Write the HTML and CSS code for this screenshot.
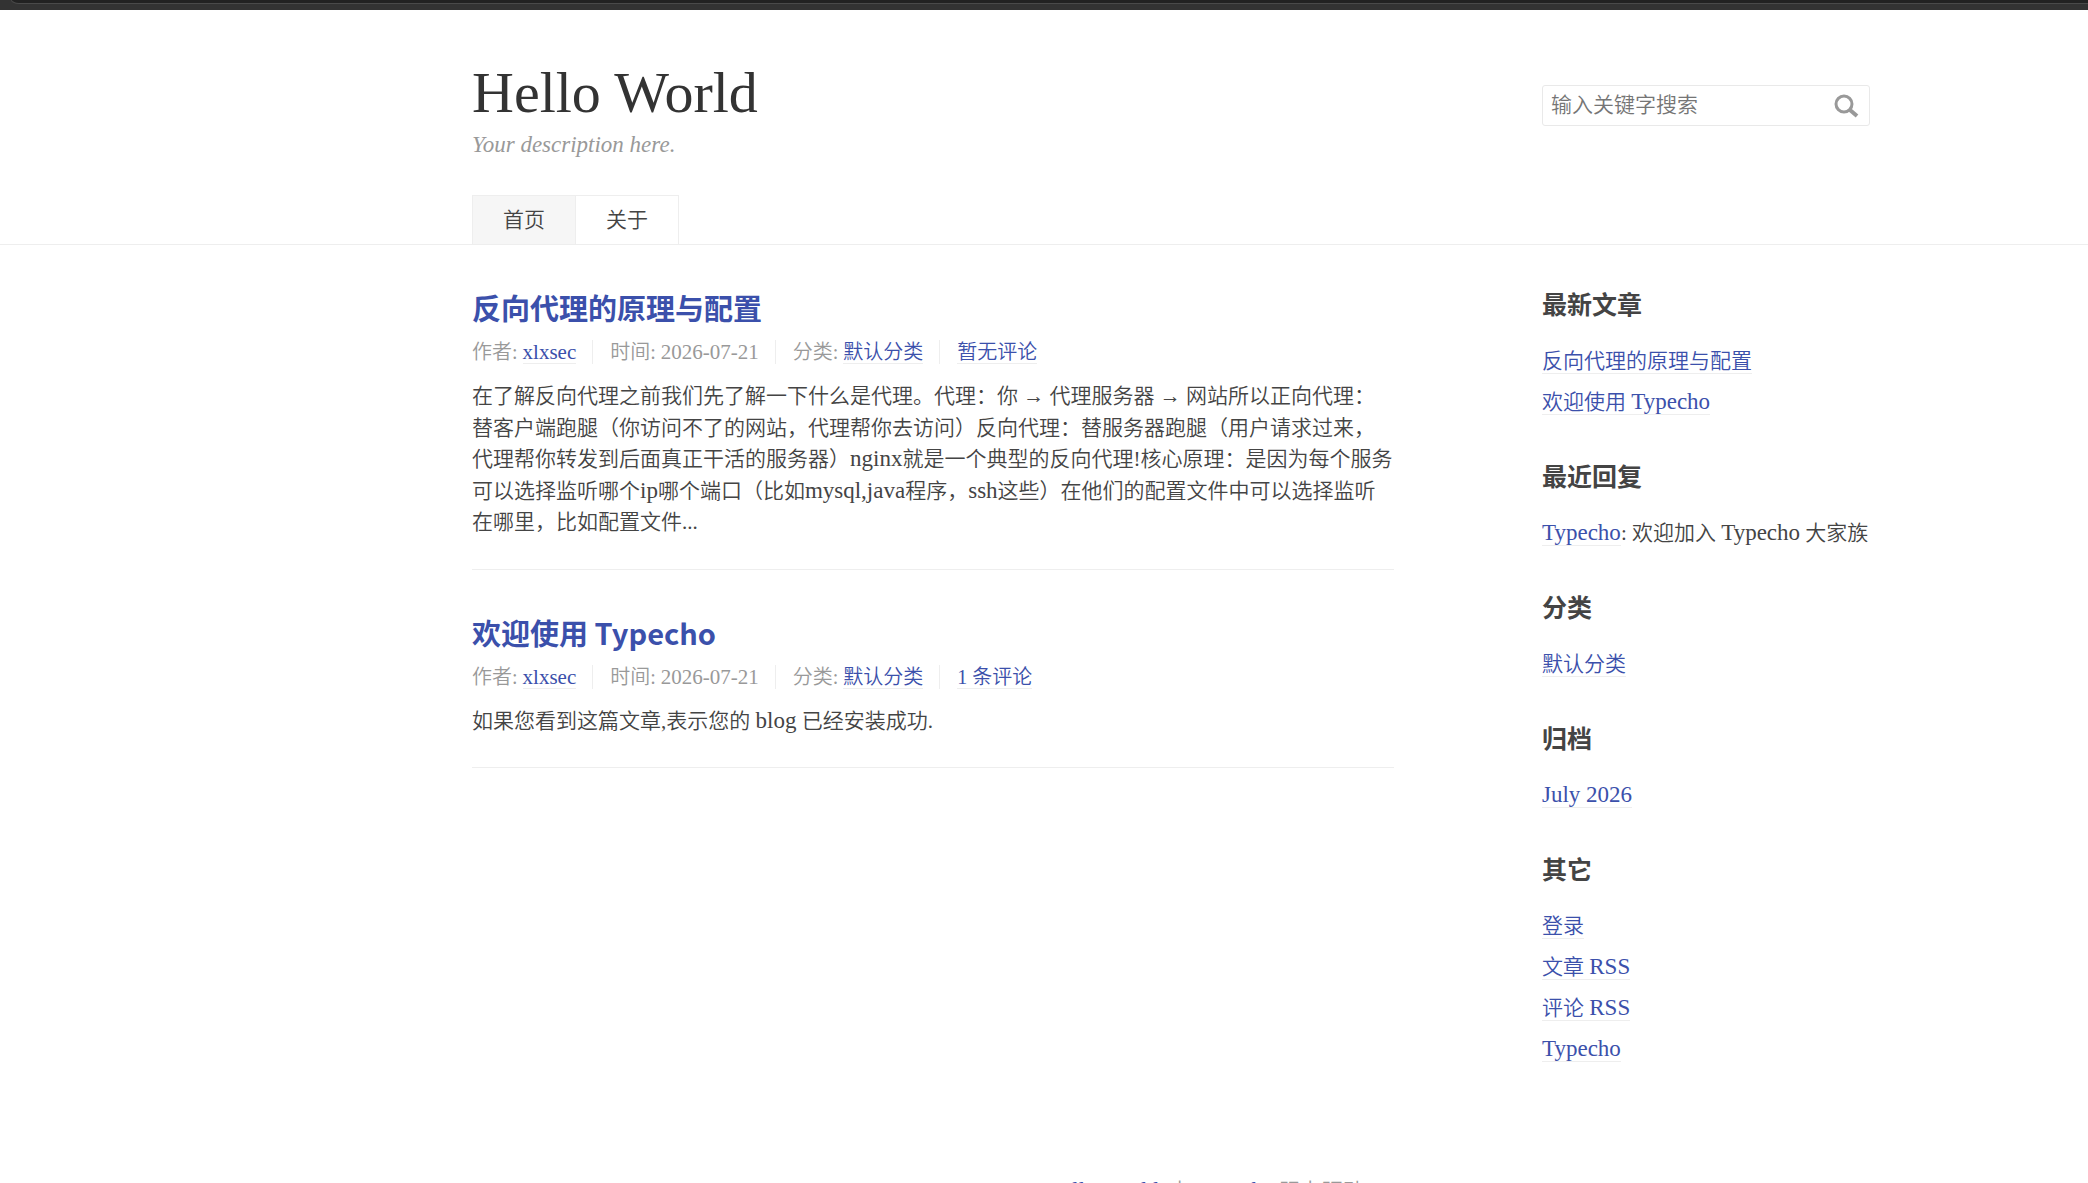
FILE: index.html
```html
<!DOCTYPE html>
<html lang="zh-CN">
<head>
<meta charset="utf-8">
<meta name="viewport" content="width=device-width, initial-scale=1">
<title>Hello World</title>
<link rel="stylesheet" href="styles.css">
</head>
<body>
<div class="window-bar"><div class="window-bar-field"></div></div>
<header class="site-header">
  <div class="container header-inner">
    <div class="brand">
      <a class="logo" href="#">Hello World</a>
      <p class="description">Your description here.</p>
    </div>
    <form class="search" role="search">
      <input class="search-input" type="text" aria-label="搜索关键字" placeholder="输入关键字搜索">
      <button class="search-button" type="button" aria-label="搜索">
        <svg width="26" height="26" viewBox="0 0 26 26" fill="none" stroke="#999" aria-hidden="true"><circle cx="11" cy="11" r="8" stroke-width="3"/><path d="M17 17l7 6" stroke-width="4"/></svg>
      </button>
    </form>
    <nav class="nav">
      <a class="nav-item nav-current" href="#">首页</a>
      <a class="nav-item" href="#">关于</a>
    </nav>
  </div>
</header>
<div class="container layout">
  <main>
    <article class="post">
      <h2 class="post-title"><a href="#">反向代理的原理与配置</a></h2>
      <ul class="post-meta">
        <li>作者: <a class="link" href="#"><span class="latin">xlxsec</span></a></li>
        <li>时间: <time class="latin" datetime="2026-07-21">2026-07-21</time></li>
        <li>分类: <a class="link" href="#">默认分类</a></li>
        <li><a class="link" href="#">暂无评论</a></li>
      </ul>
      <p class="post-content">在了解反向代理之前我们先了解一下什么是代理。代理：你 → 代理服务器 → 网站所以正向代理：替客户端跑腿（你访问不了的网站，代理帮你去访问）反向代理：替服务器跑腿（用户请求过来，代理帮你转发到后面真正干活的服务器）<span class="latin">nginx</span>就是一个典型的反向代理!核心原理：是因为每个服务可以选择监听哪个<span class="latin">ip</span>哪个端口（比如<span class="latin">mysql,java</span>程序，<span class="latin">ssh</span>这些）在他们的配置文件中可以选择监听在哪里，比如配置文件...</p>
    </article>
    <article class="post">
      <h2 class="post-title"><a href="#">欢迎使用 Typecho</a></h2>
      <ul class="post-meta">
        <li>作者: <a class="link" href="#"><span class="latin">xlxsec</span></a></li>
        <li>时间: <time class="latin" datetime="2026-07-21">2026-07-21</time></li>
        <li>分类: <a class="link" href="#">默认分类</a></li>
        <li><a class="link" href="#">1 条评论</a></li>
      </ul>
      <p class="post-content">如果您看到这篇文章,表示您的 <span class="latin">blog</span> 已经安装成功.</p>
    </article>
  </main>
  <aside class="sidebar">
    <section class="widget">
      <h3>最新文章</h3>
      <ul>
        <li><a class="link" href="#">反向代理的原理与配置</a></li>
        <li><a class="link" href="#">欢迎使用 <span class="latin">Typecho</span></a></li>
      </ul>
    </section>
    <section class="widget">
      <h3>最近回复</h3>
      <ul>
        <li><a class="link" href="#"><span class="latin">Typecho</span></a>: 欢迎加入 <span class="latin">Typecho</span> 大家族</li>
      </ul>
    </section>
    <section class="widget">
      <h3>分类</h3>
      <ul>
        <li><a class="link" href="#">默认分类</a></li>
      </ul>
    </section>
    <section class="widget">
      <h3>归档</h3>
      <ul>
        <li><a class="link" href="#"><span class="latin">July 2026</span></a></li>
      </ul>
    </section>
    <section class="widget">
      <h3>其它</h3>
      <ul>
        <li><a class="link" href="#">登录</a></li>
        <li><a class="link" href="#">文章 <span class="latin">RSS</span></a></li>
        <li><a class="link" href="#">评论 <span class="latin">RSS</span></a></li>
        <li><a class="link" href="#"><span class="latin">Typecho</span></a></li>
      </ul>
    </section>
  </aside>
</div>
<footer class="container footer">© <span class="latin">2026</span> <a href="#"><span class="latin">Hello World</span></a>. 由 <a href="#"><span class="latin">Typecho</span></a> 强力驱动.</footer>
</body>
</html>
```
FILE: styles.css
```css
* { box-sizing: border-box; }

body {
  margin: 0;
  height: 100vh;
  overflow: hidden;
  background: #fff;
  color: #444;
  font-family: "Liberation Serif", "Noto Sans CJK SC", serif;
  font-size: 21px;
  font-weight: 350;
  line-height: 1.5;
}

a { color: #3b50ab; text-decoration: none; }
ul { margin: 0; padding: 0; list-style: none; }

.latin { font-size: 23px; line-height: 1; }
.link { border-bottom: 1px solid #eee; }

.window-bar { height: 10px; background: #333; overflow: hidden; }
.window-bar-field {
  height: 4px;
  margin-left: 11px;
  background: #222;
  border-bottom: 1px solid #4a4a4a;
  border-left: 1px solid #4a4a4a;
  border-bottom-left-radius: 8px 4px;
}

.container { margin: 0 218px 0 472px; }

.site-header { border-bottom: 1px solid #eee; }
.header-inner {
  display: grid;
  grid-template-columns: minmax(0, 1fr) 328px;
  padding-top: 50px;
}
.logo { display: block; color: #333; font-size: 58px; line-height: 66px; }
.description {
  margin: 4px 0 0;
  color: #999;
  font-size: 23px;
  font-style: italic;
  line-height: 30px;
}

.search {
  display: flex;
  align-items: center;
  height: 41px;
  margin-top: 25px;
  border: 1px solid #e9e9e9;
  border-radius: 3px;
}
.search-input {
  flex: 1;
  min-width: 0;
  height: 100%;
  padding: 0 8px;
  border: 0;
  background: transparent;
  font: inherit;
  outline: 0;
}
.search-input::placeholder { color: #757575; }
.search-button {
  display: flex;
  padding: 0 10px;
  border: 0;
  background: transparent;
}

.nav { display: flex; grid-column: 1 / -1; margin-top: 35px; }
.nav-item {
  height: 49px;
  padding: 0 30px;
  border: 1px solid #eee;
  border-bottom: 0;
  color: #444;
  line-height: 48px;
}
.nav-item + .nav-item { margin-left: -1px; }
.nav-current { background: #f6f6f6; }

.layout {
  display: grid;
  grid-template-columns: minmax(0, 1fr) 328px;
  gap: 148px;
}

.post { padding: 40px 0 30px; border-bottom: 1px solid #eee; }
.post-title {
  margin: 0;
  font-family: "Noto Sans CJK SC", sans-serif;
  font-size: 29px;
  font-weight: 700;
  line-height: 44px;
}
.post-meta {
  display: flex;
  align-items: center;
  margin: 11px 0 17px;
  color: #999;
  font-size: 20px;
  line-height: 24px;
}
.post-meta li { height: 24px; padding-right: 16px; }
.post-meta li + li { padding-left: 17px; border-left: 1px solid #eee; }
.post-meta .latin { font-size: 21px; }
.post-content { margin: 0; }

.sidebar { padding-top: 40px; }
.widget { margin-bottom: 34px; }
.widget h3 {
  margin: 0 0 19px;
  font-family: "Noto Sans CJK SC", sans-serif;
  font-size: 25px;
  font-weight: 700;
  line-height: 37px;
}
.widget li { height: 41px; line-height: 41px; white-space: nowrap; }

.footer { padding-top: 72px; color: #999; text-align: center; }

@media (max-width: 1500px) {
  .container { margin: 0 5%; }
  .layout { gap: 5%; }
}
```
